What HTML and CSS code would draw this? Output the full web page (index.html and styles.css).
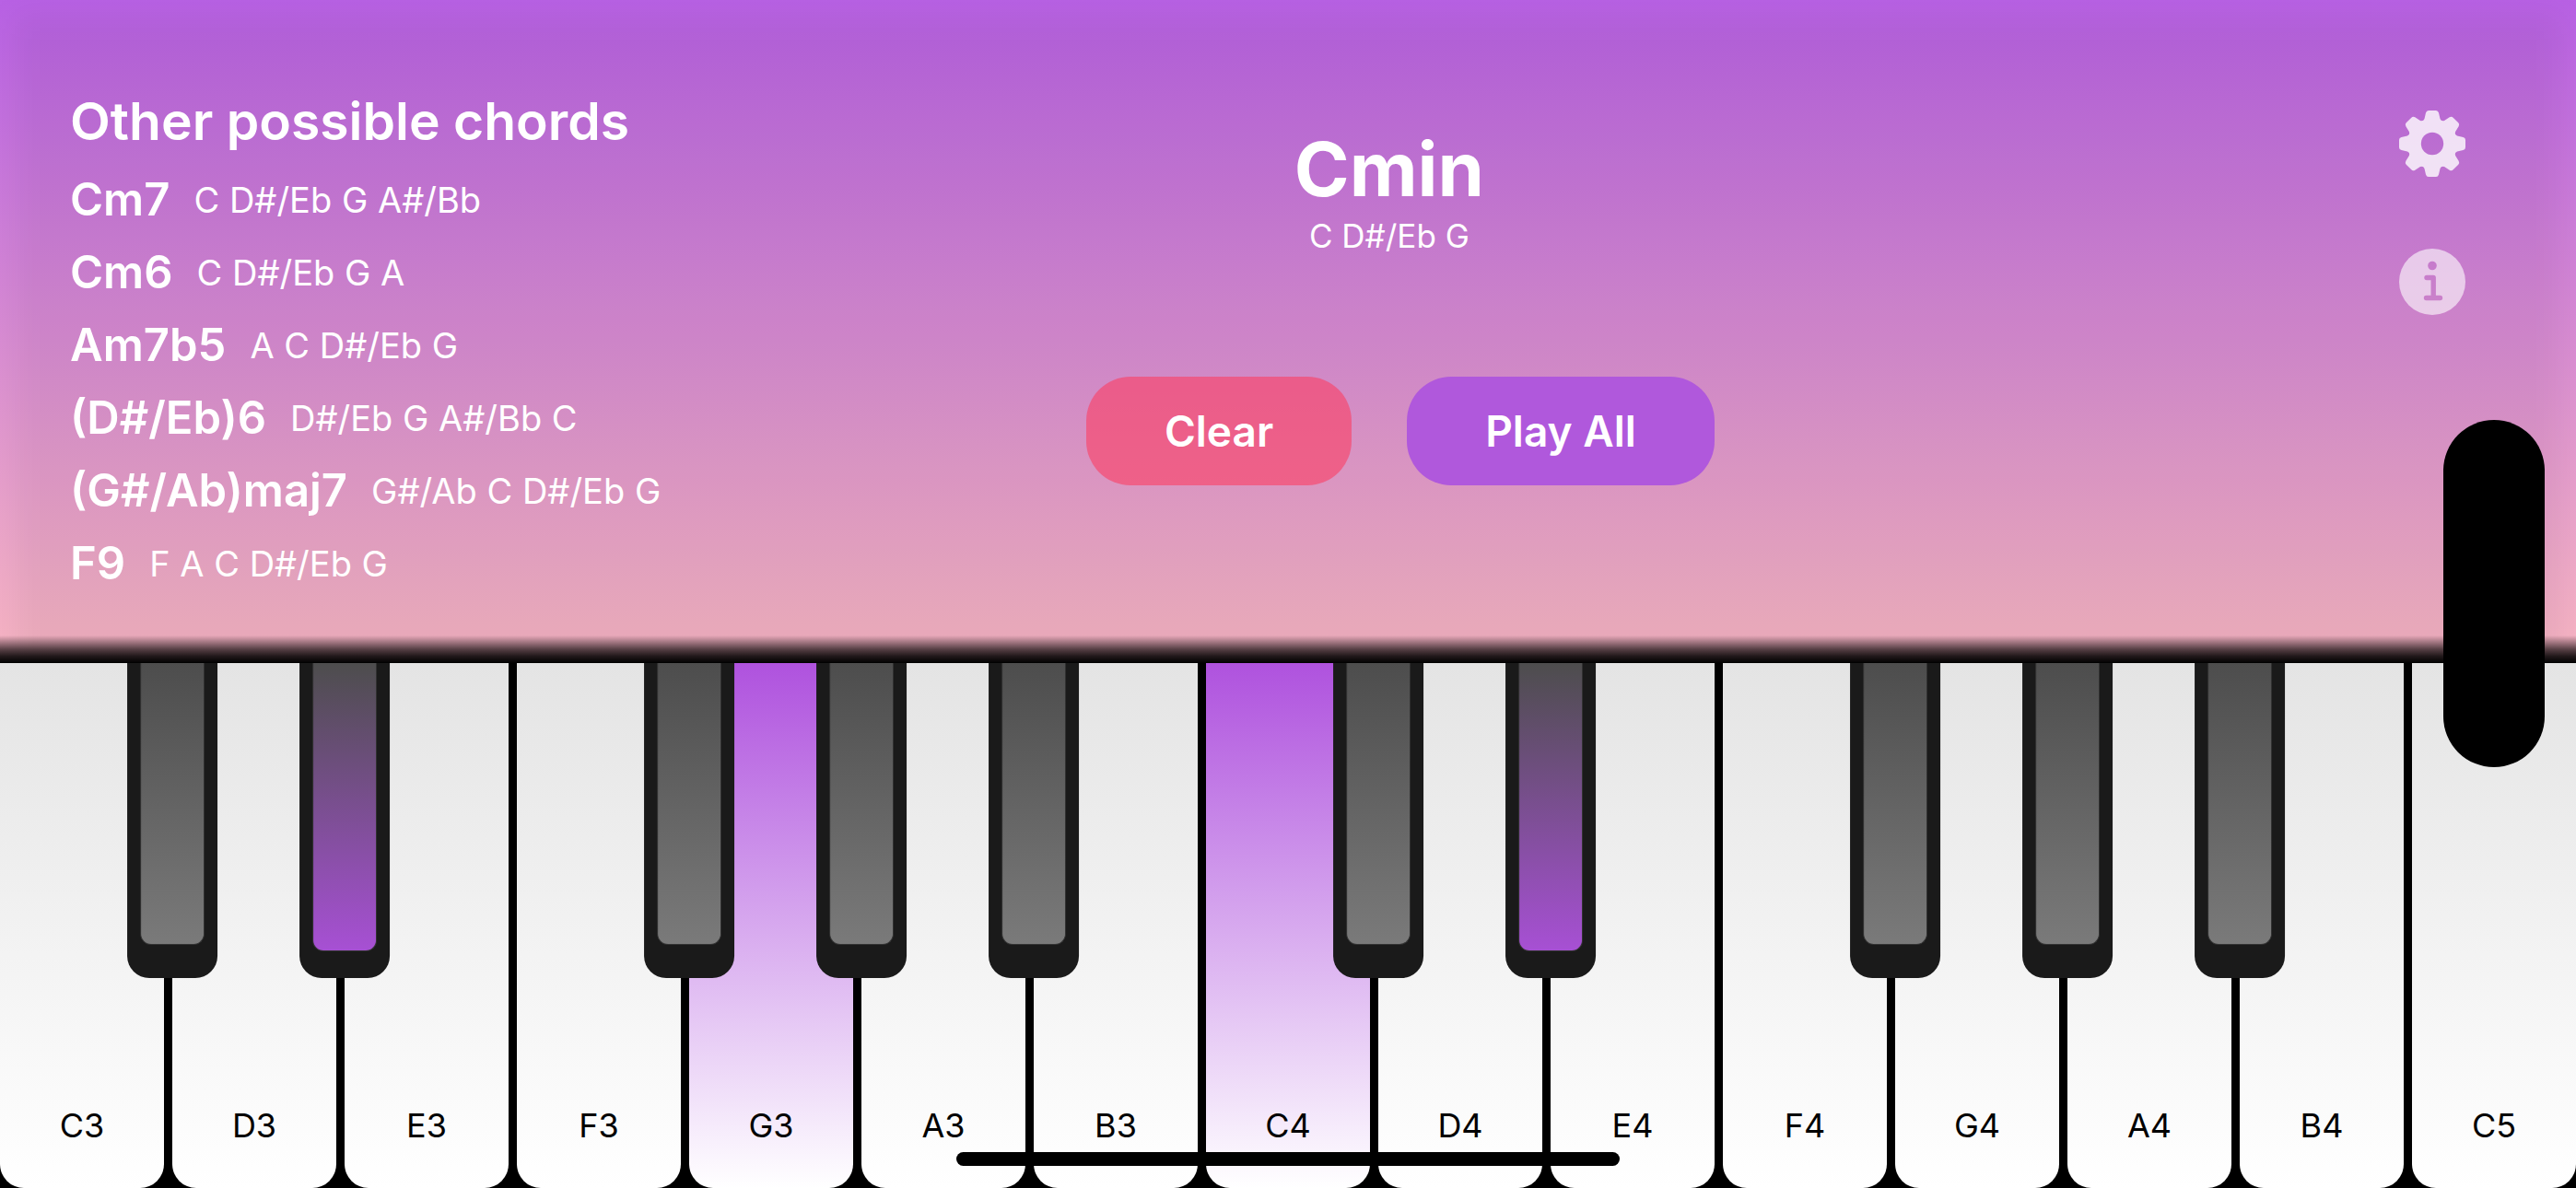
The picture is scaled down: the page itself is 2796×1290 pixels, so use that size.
FILE: index.html
```html
<!DOCTYPE html>
<html lang="en">
<head>
<meta charset="utf-8">
<title>Piano Chords</title>
<meta name="viewport" content="width=device-width, initial-scale=1">
<link rel="stylesheet" href="styles.css">
</head>
<body>
<header class="panel">
  <section class="chords">
    <h2 class="chords-title">Other possible chords</h2>
    <ul class="chord-list">
      <li class="chord"><span class="chord-name">Cm7</span><span class="chord-notes">C D#/Eb G A#/Bb</span></li>
      <li class="chord"><span class="chord-name">Cm6</span><span class="chord-notes">C D#/Eb G A</span></li>
      <li class="chord"><span class="chord-name">Am7b5</span><span class="chord-notes">A C D#/Eb G</span></li>
      <li class="chord"><span class="chord-name">(D#/Eb)6</span><span class="chord-notes">D#/Eb G A#/Bb C</span></li>
      <li class="chord"><span class="chord-name">(G#/Ab)maj7</span><span class="chord-notes">G#/Ab C D#/Eb G</span></li>
      <li class="chord"><span class="chord-name">F9</span><span class="chord-notes">F A C D#/Eb G</span></li>
    </ul>
  </section>
  <section class="current">
    <div class="current-chord">
      <h1 class="current-name">Cmin</h1>
      <p class="current-notes">C D#/Eb G</p>
    </div>
    <div class="actions">
      <button class="action action-clear" type="button">Clear</button>
      <button class="action action-play" type="button">Play All</button>
    </div>
  </section>
  <nav class="tools">
    <button class="tool tool-settings" type="button" aria-label="Settings">
      <svg viewBox="-36 -36 72 72" aria-hidden="true">
        <defs>
          <mask id="gear-hole">
            <rect x="-36" y="-36" width="72" height="72" fill="#fff"/>
            <circle r="12.2" fill="#000"/>
          </mask>
        </defs>
        <g fill="#fff" mask="url(#gear-hole)">
          <circle r="26"/>
          <path id="tooth" d="M-12-24Q-9-25-8.500-27L-7-33.500Q-6.300-36-4-36H4Q6.300-36 7-33.500L8.500-27Q9-25 12-24L8-14H-8Z"/>
          <use href="#tooth" transform="rotate(45)"/>
          <use href="#tooth" transform="rotate(90)"/>
          <use href="#tooth" transform="rotate(135)"/>
          <use href="#tooth" transform="rotate(180)"/>
          <use href="#tooth" transform="rotate(225)"/>
          <use href="#tooth" transform="rotate(270)"/>
          <use href="#tooth" transform="rotate(315)"/>
        </g>
      </svg>
    </button>
    <button class="tool tool-info" type="button" aria-label="Information">
      <svg viewBox="-36 -36 72 72" aria-hidden="true">
        <defs>
          <mask id="info-mark">
            <rect x="-36" y="-36" width="72" height="72" fill="#fff"/>
            <circle cy="-17.500" r="4.800" fill="#000"/>
            <path d="M-6-4.500H1.200V17.500M-6.500 17.500H8.500" fill="none" stroke="#000" stroke-width="5.400" stroke-linecap="round" stroke-linejoin="round"/>
          </mask>
        </defs>
        <circle r="36" fill="#fff" mask="url(#info-mark)"/>
      </svg>
    </button>
  </nav>
</header>
<main class="keyboard">
  <div class="key"><button class="white" type="button">C3</button><button class="black" type="button" aria-label="C#3"></button></div>
  <div class="key"><button class="white" type="button">D3</button><button class="black on" type="button" aria-label="D#3"></button></div>
  <div class="key"><button class="white" type="button">E3</button></div>
  <div class="key"><button class="white" type="button">F3</button><button class="black" type="button" aria-label="F#3"></button></div>
  <div class="key"><button class="white on" type="button">G3</button><button class="black" type="button" aria-label="G#3"></button></div>
  <div class="key"><button class="white" type="button">A3</button><button class="black" type="button" aria-label="A#3"></button></div>
  <div class="key"><button class="white" type="button">B3</button></div>
  <div class="key"><button class="white on" type="button">C4</button><button class="black" type="button" aria-label="C#4"></button></div>
  <div class="key"><button class="white" type="button">D4</button><button class="black on" type="button" aria-label="D#4"></button></div>
  <div class="key"><button class="white" type="button">E4</button></div>
  <div class="key"><button class="white" type="button">F4</button><button class="black" type="button" aria-label="F#4"></button></div>
  <div class="key"><button class="white" type="button">G4</button><button class="black" type="button" aria-label="G#4"></button></div>
  <div class="key"><button class="white" type="button">A4</button><button class="black" type="button" aria-label="A#4"></button></div>
  <div class="key"><button class="white" type="button">B4</button></div>
  <div class="key"><button class="white" type="button">C5</button></div>
</main>
<div class="camera-island"></div>
<div class="home-indicator"></div>
</body>
</html>
```
FILE: styles.css
```css
*,
*::before,
*::after {
  box-sizing: border-box;
}

body {
  position: relative;
  display: flex;
  flex-direction: column;
  min-height: 100vh;
  margin: 0;
  background: #000;
  color: #fff;
  font-family: Inter, "Liberation Sans", sans-serif;
}

h1,
h2,
p,
ul {
  margin: 0;
  padding: 0;
}

button {
  margin: 0;
  padding: 0;
  border: 0;
  font: inherit;
  cursor: pointer;
}

/* Top panel */
.panel {
  position: relative;
  display: grid;
  grid-template-columns: 23fr auto 17fr;
  padding: 96px 120px 78px 76px;
  overflow: hidden;
  background: linear-gradient(#b861e4, #f8b6c3);
}

/* Soft shade that leaves a lighter rim at the top and sides */
.panel::before {
  content: "";
  position: absolute;
  inset: 16px 16px -48px;
  background: rgb(0 0 0 / 5%);
  filter: blur(16px);
}

/* Shadow where the panel meets the keys */
.panel::after {
  content: "";
  position: absolute;
  inset: auto 0 0;
  height: 30px;
  background: linear-gradient(transparent, rgb(0 0 0 / 63%) 50%, rgb(0 0 0 / 86%) 75%, #000);
}

.panel > * {
  position: relative;
}

.chords-title {
  font-size: 57px;
  font-weight: 600;
  line-height: 72px;
  white-space: nowrap;
}

.chord-list {
  display: grid;
  gap: 19px;
  padding-top: 19px;
  list-style: none;
}

.chord {
  display: flex;
  align-items: center;
  gap: 26px;
  white-space: nowrap;
}

.chord-name {
  font-size: 49px;
  font-weight: 600;
  line-height: 60px;
}

.chord-notes {
  font-size: 38px;
  line-height: 60px;
}

.current {
  display: flex;
  flex-direction: column;
  gap: 129px;
  padding-top: 40px;
}

.current-chord {
  padding-right: 24px;
  text-align: center;
}

.current-name {
  font-size: 81px;
  font-weight: 700;
  line-height: 96px;
}

.current-notes {
  font-size: 35px;
  line-height: 48px;
}

.actions {
  display: flex;
  gap: 60px;
}

.action {
  padding: 0 85px;
  border-radius: 48px;
  color: #fff;
  font-size: 46px;
  font-weight: 600;
  line-height: 118px;
}

.action-clear {
  background: rgb(252 62 98 / 60%);
}

.action-play {
  background: #b058dc;
}

.tools {
  display: flex;
  flex-direction: column;
  align-items: flex-end;
  gap: 78px;
  padding-top: 24px;
}

.tool {
  width: 72px;
  height: 72px;
  background: none;
}

.tool svg {
  display: block;
}

.tool-settings {
  opacity: 0.8;
}

.tool-info {
  opacity: 0.6;
}

/* Keyboard */
.keyboard {
  flex: 1;
  display: grid;
  grid-template-columns: repeat(15, 1fr);
  gap: 9px;
  min-height: 400px;
}

.key {
  position: relative;
  display: flex;
}

.white {
  flex: 1;
  display: flex;
  align-items: flex-end;
  justify-content: center;
  padding-bottom: 44px;
  border-radius: 0 0 26px 26px;
  background: linear-gradient(#e4e4e4, #fff);
  color: #000;
  font-size: 36px;
  line-height: 48px;
}

.white.on {
  background: linear-gradient(#af52de, #fff);
}

.black {
  position: absolute;
  z-index: 1;
  top: 0;
  left: calc(100% + 9px);
  width: 55%;
  height: 60%;
  padding: 0 14px 36px;
  border-radius: 0 0 24px 24px;
  background: #1a1a1a;
  transform: translateX(-50%);
}

.black::before {
  content: "";
  display: block;
  height: 100%;
  border: 1px solid #333;
  border-top: 0;
  border-radius: 0 0 12px 12px;
  background: linear-gradient(#4d4d4d, #7a7a7a);
}

.black.on {
  padding-bottom: 29px;
}

.black.on::before {
  background: linear-gradient(#4d4d4d, #a750d4);
}

/* Device overlays */
.camera-island {
  position: absolute;
  z-index: 2;
  top: 456px;
  right: 34px;
  width: 110px;
  height: 377px;
  border-radius: 55px;
  background: #000;
}

.home-indicator {
  position: absolute;
  z-index: 2;
  bottom: 24px;
  left: 50%;
  width: 720px;
  height: 15px;
  border-radius: 8px;
  background: #000;
  transform: translateX(-50%);
}
```
